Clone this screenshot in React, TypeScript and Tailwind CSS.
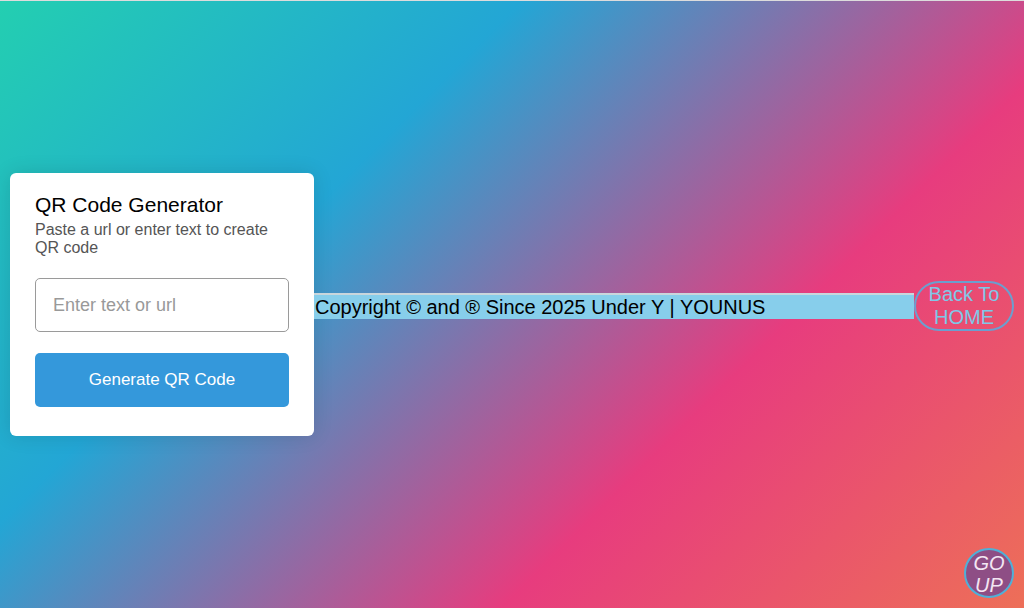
export default function App() {
  return (
    <div
      className="relative h-[608px] w-full overflow-hidden border-t border-[#dcdcdc] bg-[linear-gradient(135deg,#23d5ab_-5%,#23a6d5_32%,#e73c7e_68%,#ee7752_105%)] font-['Liberation_Sans',Arial,sans-serif]"
    >
      <div className="flex h-full items-center">
        {/* generator card */}
        <div className="ml-[10px] w-[304px] shrink-0 rounded-[6px] bg-white px-[25px] pt-[20px] pb-[29px] shadow-[0_0_20px_rgba(0,0,0,0.12)]">
          <h1 className="text-[21px] leading-[24px] text-black">QR Code Generator</h1>
          <p className="mt-[4px] text-[16px] leading-[18px] text-[#555]">
            Paste a url or enter text to create QR code
          </p>
          <input
            type="text"
            placeholder="Enter text or url"
            className="mt-[21px] h-[54px] w-full rounded-[5px] border border-[#9a9a9a] px-[17px] text-[18px] text-black outline-none placeholder:text-[#999]"
          />
          <button className="mt-[21px] h-[54px] w-full rounded-[5px] bg-[#3498db] text-[17px] text-white">
            Generate QR Code
          </button>
        </div>

        {/* footer strip */}
        <footer className="mt-[2px] flex h-[26px] w-[600px] shrink-0 items-center border-t-2 border-[#c9d6dc] bg-[#87ceeb] pl-[1px] text-[20px] leading-[24px] text-black">
          Copyright © and ® Since 2025 Under Y | YOUNUS
        </footer>

        <a
          href="#"
          className="mt-[2px] flex h-[50px] w-[100px] shrink-0 flex-col items-center justify-center rounded-full border-2 border-[#6b9fcf] text-center text-[20px] leading-[23px] text-[#7ec8e8]"
        >
          <span>Back To</span>
          <span>HOME</span>
        </a>
      </div>

      {/* floating go up */}
      <a
        href="#"
        className="absolute right-[10px] bottom-[10px] flex h-[50px] w-[50px] flex-col items-center justify-center rounded-full border-2 border-[#4fb0d8] bg-[#8e4e85] pt-[2px] text-center text-[20px] leading-[22px] italic text-[#f3e6f3]"
      >
        <span>GO</span>
        <span>UP</span>
      </a>
    </div>
  );
}
